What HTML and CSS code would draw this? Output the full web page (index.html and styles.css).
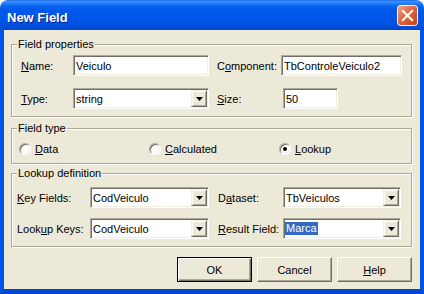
FILE: index.html
```html
<!DOCTYPE html>
<html>
<head>
<meta charset="utf-8">
<link rel="stylesheet" href="styles.css">
</head>
<body>
<div class="window">
  <div class="titlebar">
    <span class="title">New Field</span>
    <span class="close">
      <svg width="21" height="21" viewBox="0 0 21 21">
        <defs>
          <linearGradient id="cg" x1="0" y1="0" x2="1" y2="1">
            <stop offset="0" stop-color="#F0A58A"/>
            <stop offset="0.45" stop-color="#E06A45"/>
            <stop offset="1" stop-color="#C23A10"/>
          </linearGradient>
        </defs>
        <rect x="0.5" y="0.5" width="20" height="20" rx="3" fill="url(#cg)" stroke="#fff"/>
        <path d="M6 6 L15 15 M15 6 L6 15" stroke="#fff" stroke-width="2.2" stroke-linecap="square"/>
      </svg>
    </span>
  </div>
  <div class="client">
    <div class="group g1">
      <span class="legend">Field properties</span>
      <div class="row">
        <span class="lbl w52"><u>N</u>ame:</span>
        <div class="edit w136">Veiculo</div>
        <span class="lbl ml8 w64">C<u>o</u>mponent:</span>
        <div class="edit w121">TbControleVeiculo2</div>
      </div>
      <div class="row">
        <span class="lbl w52"><u>T</u>ype:</span>
        <div class="edit combo w136"><span class="ctext">string</span><span class="dd"><svg width="7" height="4" viewBox="0 0 7 4"><polygon points="0,0 7,0 3.5,4" fill="#000"/></svg></span></div>
        <span class="lbl ml8 w66"><u>S</u>ize:</span>
        <div class="edit w55">50</div>
      </div>
    </div>

    <div class="group g2">
      <span class="legend">Field type</span>
      <div class="radios">
        <div class="radio"><span class="rc"></span><span><u>D</u>ata</span></div>
        <div class="radio"><span class="rc"></span><span><u>C</u>alculated</span></div>
        <div class="radio"><span class="rc on"></span><span><u>L</u>ookup</span></div>
      </div>
    </div>

    <div class="group g3">
      <span class="legend">Lookup definition</span>
      <div class="row">
        <span class="lbl w73"><u>K</u>ey Fields:</span>
        <div class="edit combo w119"><span class="ctext">CodVeiculo</span><span class="dd"><svg width="7" height="4" viewBox="0 0 7 4"><polygon points="0,0 7,0 3.5,4" fill="#000"/></svg></span></div>
        <span class="lbl ml9 w65">D<u>a</u>taset:</span>
        <div class="edit combo w118"><span class="ctext">TbVeiculos</span><span class="dd"><svg width="7" height="4" viewBox="0 0 7 4"><polygon points="0,0 7,0 3.5,4" fill="#000"/></svg></span></div>
      </div>
      <div class="row">
        <span class="lbl w73">Look<u>u</u>p Keys:</span>
        <div class="edit combo w119"><span class="ctext">CodVeiculo</span><span class="dd"><svg width="7" height="4" viewBox="0 0 7 4"><polygon points="0,0 7,0 3.5,4" fill="#000"/></svg></span></div>
        <span class="lbl ml9 w65"><u>R</u>esult Field:</span>
        <div class="edit combo w118"><span class="ctext"><span class="sel">Marca</span></span><span class="dd"><svg width="7" height="4" viewBox="0 0 7 4"><polygon points="0,0 7,0 3.5,4" fill="#000"/></svg></span></div>
      </div>
    </div>

    <div class="buttons">
      <div class="btn default">OK</div>
      <div class="btn">Cancel</div>
      <div class="btn"><u>H</u>elp</div>
    </div>
  </div>
</div>
</body>
</html>
```
FILE: styles.css
```css
* { box-sizing: border-box; }
html, body { margin: 0; padding: 0; background: #fff; }
body {
  font-family: "Liberation Sans", Arial, sans-serif;
  font-size: 11px;
  color: #000;
}
.window {
  width: 424px;
  height: 294px;
  display: flex;
  flex-direction: column;
}
.titlebar {
  height: 30px;
  flex: none;
  border-radius: 8px 8px 0 0;
  background: linear-gradient(to bottom, #0A5BE0 0, #3D91FF 1px, #2B81FB 3px, #0C63F0 6px, #0058EA 10px, #0056E7 20px, #0050DD 26px, #0049D3 29px, #0047CF 30px);
  display: flex;
  align-items: center;
  justify-content: space-between;
  padding: 5px 6px 0 7px;
}
.title {
  color: #fff;
  font-weight: bold;
  font-size: 13px;
  text-shadow: 1px 1px #0A1F8F;
}
.close {
  align-self: flex-start;
  width: 21px;
  height: 21px;
  display: block;
}
.close svg { display: block; }
.client {
  flex: 1;
  background: #ECE9D8;
  border: solid #0055E5;
  border-width: 0 4px 5px 4px;
  border-bottom-color: #0047D2;
  padding: 14px 8px 7px 7px;
  display: flex;
  flex-direction: column;
}
.group {
  position: relative;
  border: 1px solid #ACA899;
  box-shadow: inset 1px 1px #fff, 1px 1px #fff;
  display: flex;
  flex-direction: column;
}
.legend {
  position: absolute;
  top: -7px;
  left: 5px;
  line-height: 13px;
  padding: 0 1px;
  background: #ECE9D8;
}
.g1 { height: 73px; padding: 10px 0 0 9px; gap: 12px; }
.g2 { height: 36px; padding: 13px 0 0 7px; margin-top: 11px; }
.g3 { height: 74px; padding: 13px 0 0 5px; gap: 10px; margin-top: 9px; }
.row {
  display: flex;
  align-items: center;
  height: 21px;
}
.lbl { flex: none; white-space: nowrap; }
.w52 { width: 52px; }
.w64 { width: 64px; }
.w66 { width: 66px; }
.w73 { width: 73px; }
.w65 { width: 65px; }
.w136 { width: 136px; }
.w121 { width: 121px; }
.w119 { width: 119px; }
.w118 { width: 118px; }
.w55 { width: 55px; }
.ml8 { margin-left: 8px; }
.ml9 { margin-left: 9px; }
.edit {
  flex: none;
  height: 21px;
  background: #fff;
  border: 1px solid;
  border-color: #ACA899 #fff #fff #ACA899;
  box-shadow: inset 1px 1px #716F64, inset -1px -1px #F1EFE2;
  padding-left: 2px;
  display: flex;
  align-items: center;
  white-space: nowrap;
}
.combo { padding: 1px; }
.ctext { flex: 1; padding-left: 1px; display: flex; align-items: center; }
.sel {
  background: #316AC5;
  color: #fff;
  margin-left: -1px;
  padding: 0 1px;
  line-height: 13px;
}
.dd {
  flex: none;
  width: 16px;
  height: 17px;
  background: #ECE9D8;
  border: 1px solid;
  border-color: #F1EFE2 #716F64 #716F64 #F1EFE2;
  box-shadow: inset 1px 1px #fff, inset -1px -1px #ACA899;
  display: flex;
  align-items: center;
  justify-content: center;
}
.dd svg { display: block; }
.radios {
  display: flex;
  align-items: center;
  height: 13px;
}
.radio {
  display: flex;
  align-items: center;
  width: 130px;
}
.rc {
  width: 12px;
  height: 12px;
  border-radius: 50%;
  background: #fff;
  border: 1px solid;
  border-color: #ACA899 #fff #fff #ACA899;
  box-shadow: inset 1px 1px #716F64, inset -1px -1px #F1EFE2;
  margin-right: 4px;
  display: flex;
  align-items: center;
  justify-content: center;
}
.rc.on::after {
  content: "";
  width: 4px;
  height: 4px;
  border-radius: 50%;
  background: #000;
}
.buttons {
  margin-top: 10px;
  display: flex;
  justify-content: flex-end;
  gap: 5px;
}
.btn {
  width: 75px;
  height: 25px;
  background: #ECE9D8;
  border: 1px solid;
  border-color: #fff #716F64 #716F64 #fff;
  box-shadow: inset -1px -1px #ACA899;
  display: flex;
  align-items: center;
  justify-content: center;
}
.btn.default {
  border-color: #000;
  box-shadow: inset 1px 1px #fff, inset -1px -1px #716F64, inset -2px -2px #ACA899;
}
```
